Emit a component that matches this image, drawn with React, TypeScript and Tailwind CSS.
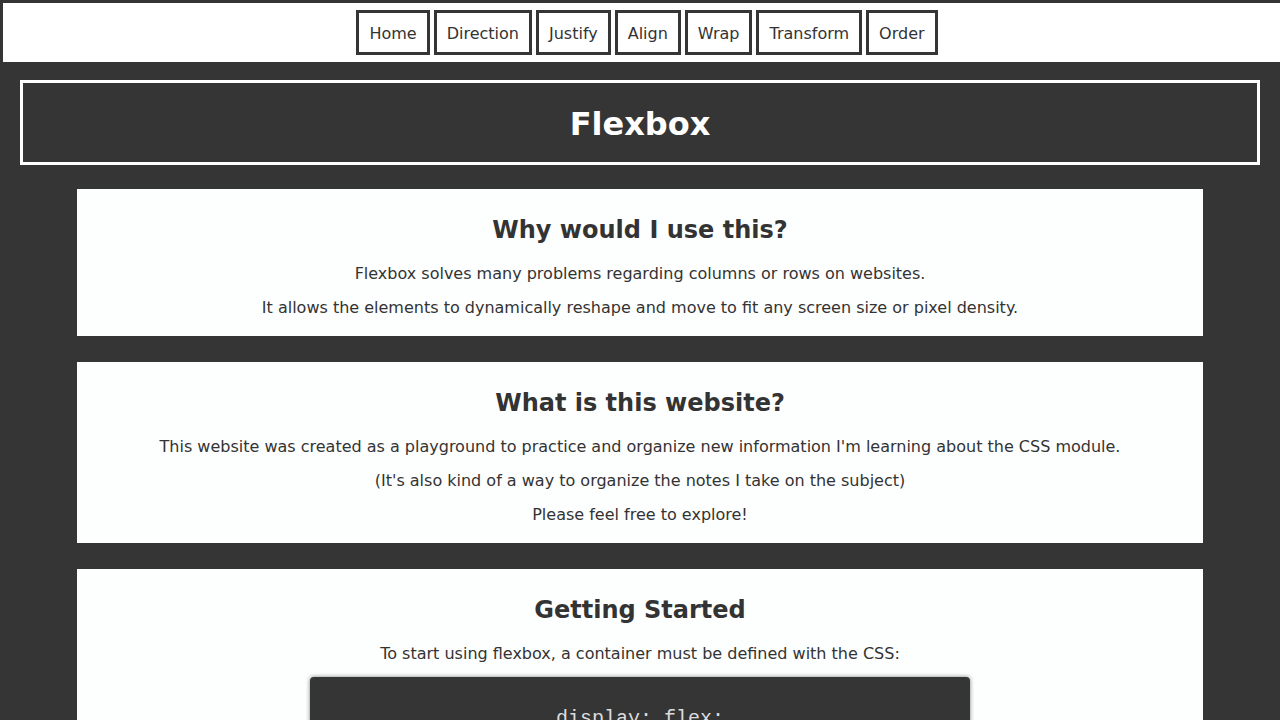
import React from "react";

const links = ["Home", "Direction", "Justify", "Align", "Wrap", "Transform", "Order"];

function Card({ title, children }: { title: string; children: React.ReactNode }) {
  return (
    <section className="ml-[74px] mr-[77px] bg-[#fdfefe] pt-[27px] pb-[19px] text-center text-[#333333]">
      <h2 className="text-[24px] leading-[28px] font-bold mb-[20px]">{title}</h2>
      <div className="flex flex-col gap-[15px] text-[16px] leading-[19px]">{children}</div>
    </section>
  );
}

export default function App() {
  return (
    <div
      className="min-h-[720px] bg-[#353535] pt-[3px] pl-[3px] overflow-hidden"
      style={{ fontFamily: '"DejaVu Sans", Verdana, sans-serif' }}
    >
      <nav className="w-[1280px] h-[59px] bg-white flex items-center justify-center pl-[8px] gap-[4px]">
        {links.map((l) => (
          <a
            key={l}
            className="border-[3px] border-[#353535] px-[10px] pt-[11px] pb-[9px] text-[16px] leading-[19px] text-[#333333]"
          >
            {l}
          </a>
        ))}
      </nav>

      <div>
        <header className="ml-[17px] mt-[18px] mr-[20px] h-[85px] border-[3px] border-white flex items-center justify-center">
          <h1 className="text-[32px] leading-[37px] font-bold text-white mt-[4px]">Flexbox</h1>
        </header>

        <div className="mt-[24px] flex flex-col gap-[26px]">
          <Card title="Why would I use this?">
            <p>Flexbox solves many problems regarding columns or rows on websites.</p>
            <p>It allows the elements to dynamically reshape and move to fit any screen size or pixel density.</p>
          </Card>
          <Card title="What is this website?">
            <p>This website was created as a playground to practice and organize new information I'm learning about the CSS module.</p>
            <p>(It's also kind of a way to organize the notes I take on the subject)</p>
            <p>Please feel free to explore!</p>
          </Card>
          <section className="ml-[74px] mr-[77px] bg-[#fdfefe] pt-[27px] pb-[20px] text-center text-[#333333]">
            <h2 className="text-[24px] leading-[28px] font-bold mb-[20px]">Getting Started</h2>
            <p className="text-[16px] leading-[19px]">To start using flexbox, a container must be defined with the CSS:</p>
            <div className="mx-auto mt-[14px] w-[660px] rounded-[4px] bg-[#353535] shadow-[0_0_4px_rgba(0,0,0,0.5)] pt-[30px] pb-[27px]">
              <pre
                className="text-[20px] leading-[24px] text-[#dcdcdc] text-center"
                style={{ fontFamily: '"Liberation Mono", "Courier New", monospace' }}
              >
                display: flex;
              </pre>
            </div>
          </section>
        </div>
      </div>
    </div>
  );
}
